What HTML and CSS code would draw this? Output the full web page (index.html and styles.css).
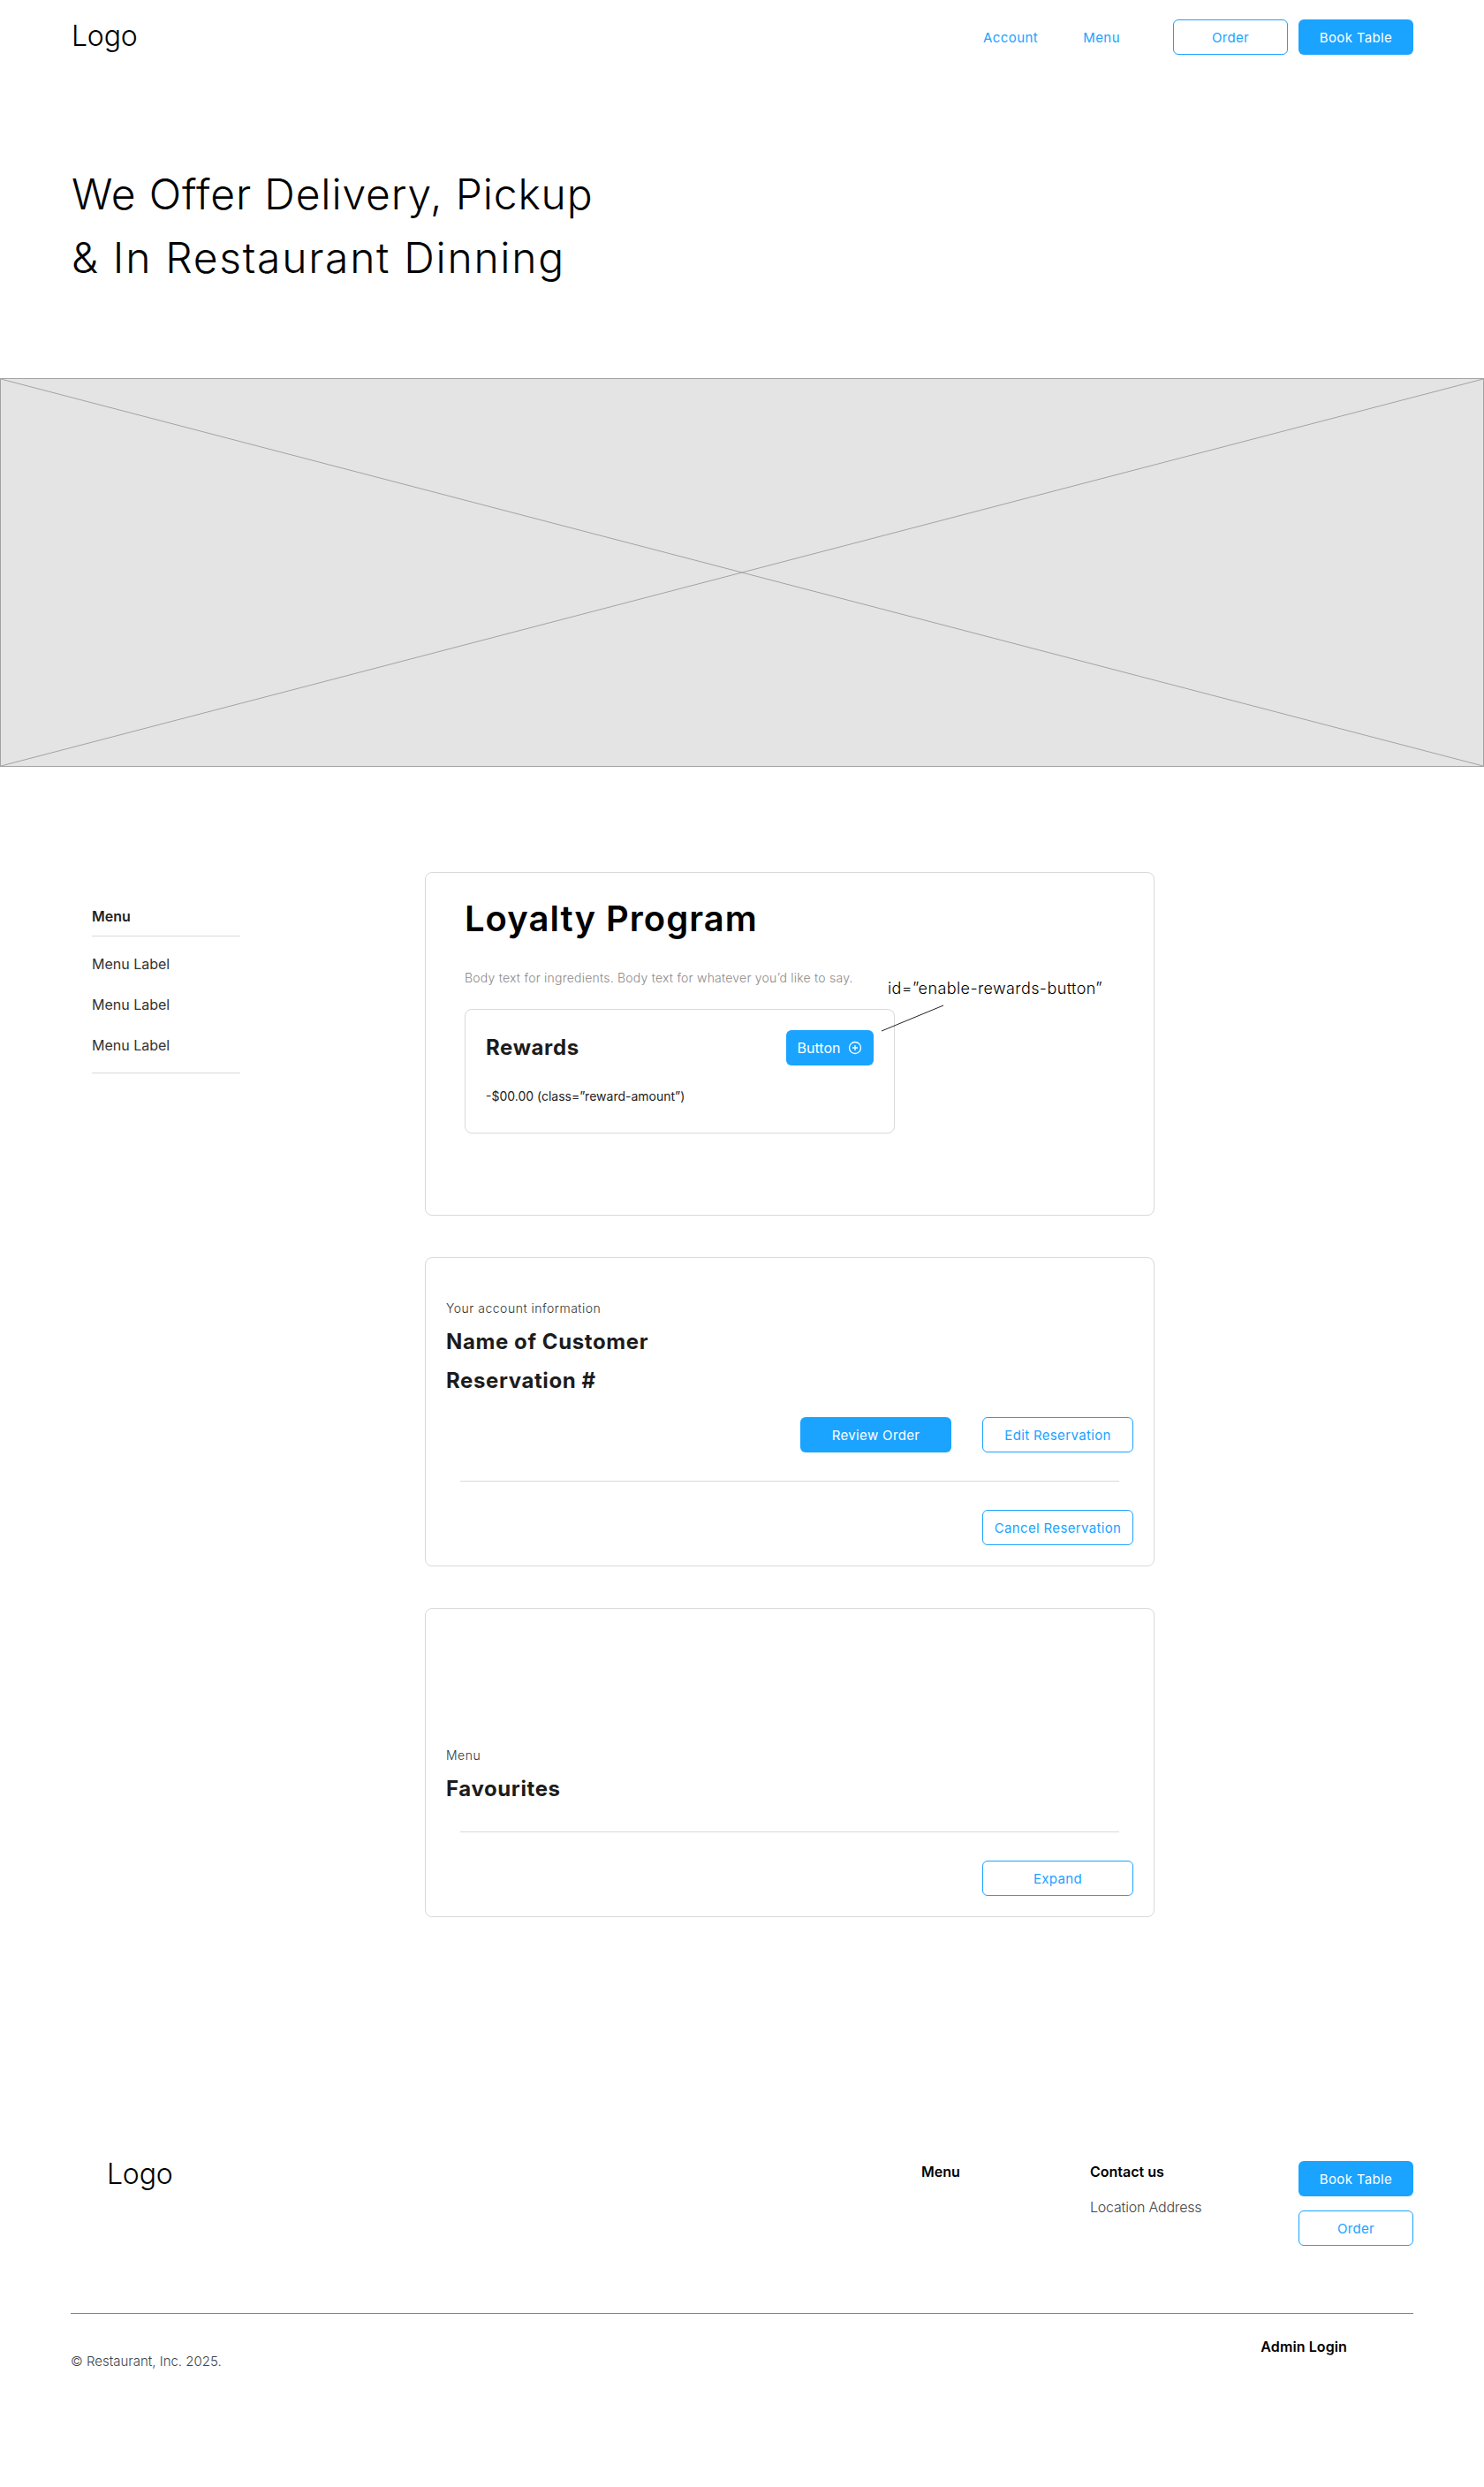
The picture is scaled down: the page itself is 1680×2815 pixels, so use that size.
FILE: index.html
```html
<!DOCTYPE html>
<html lang="en">
<head>
	<meta charset="utf-8">
	<title>Restaurant account</title>
	<link rel="stylesheet" href="styles.css">
</head>
<body>
<header class="nav">
	<div class="logo">Logo</div>
	<nav class="nav-right">
		<a class="nav-link nav-account" href="#">Account</a>
		<a class="nav-link nav-menu" href="#">Menu</a>
		<button class="btn btn-outline btn-nav" type="button">Order</button>
		<button class="btn btn-solid btn-nav" type="button">Book Table</button>
	</nav>
</header>

<section class="hero">
	<h1><span class="hero-first">We Offer Delivery, Pickup</span><br><span class="hero-second">&amp; In Restaurant Dinning</span></h1>
</section>

<div class="placeholder">
	<svg viewBox="0 0 100 100" preserveAspectRatio="none">
		<line x1="0" y1="0" x2="100" y2="100"></line>
		<line x1="0" y1="100" x2="100" y2="0"></line>
	</svg>
</div>

<main class="content">
	<aside class="sidebar">
		<div class="side-title">Menu</div>
		<ul class="side-list">
			<li>Menu Label</li>
			<li>Menu Label</li>
			<li>Menu Label</li>
		</ul>
	</aside>

	<div class="cards">
		<section class="card card-loyalty">
			<h2>Loyalty Program</h2>
			<p class="body-text">Body text for ingredients. Body text for whatever you’d like to say.</p>
			<div class="rewards">
				<div class="rewards-top">
					<h3 class="heading">Rewards</h3>
					<button class="btn btn-solid btn-icon" type="button">
						Button
						<svg class="plus" width="16" height="16" viewBox="0 0 16 16">
							<circle cx="8" cy="8" r="6.5"></circle>
							<path d="M8 5v6M5 8h6"></path>
						</svg>
					</button>
				</div>
				<p class="amount">-$00.00 (class=”reward-amount”)</p>
			</div>
			<div class="note">id=”enable-rewards-button”</div>
			<svg class="note-line" width="72" height="31" viewBox="0 0 72 31">
				<line x1="1" y1="30" x2="71" y2="1"></line>
			</svg>
		</section>

		<section class="card card-account">
			<p class="eyebrow">Your account information</p>
			<h3 class="heading">Name of Customer</h3>
			<h3 class="heading">Reservation #</h3>
			<div class="actions">
				<button class="btn btn-solid btn-wide" type="button">Review Order</button>
				<button class="btn btn-outline btn-wide" type="button">Edit Reservation</button>
			</div>
			<hr class="divider">
			<div class="actions">
				<button class="btn btn-outline btn-wide" type="button">Cancel Reservation</button>
			</div>
		</section>

		<section class="card card-favourites">
			<p class="eyebrow">Menu</p>
			<h3 class="heading">Favourites</h3>
			<hr class="divider">
			<div class="actions">
				<button class="btn btn-outline btn-wide" type="button">Expand</button>
			</div>
		</section>
	</div>
</main>

<footer class="footer">
	<div class="footer-top">
		<div class="logo footer-logo">Logo</div>
		<div class="footer-col">
			<div class="footer-title">Menu</div>
		</div>
		<div class="footer-col">
			<div class="footer-title">Contact us</div>
			<p class="address">Location Address</p>
		</div>
		<div class="footer-btns">
			<button class="btn btn-solid btn-nav" type="button">Book Table</button>
			<button class="btn btn-outline btn-nav" type="button">Order</button>
		</div>
	</div>
	<div class="footer-bottom">
		<p class="copyright">© Restaurant, Inc. 2025.</p>
		<a class="footer-title admin" href="#">Admin Login</a>
	</div>
</footer>
</body>
</html>
```

FILE: styles.css
```css
* {
	box-sizing: border-box;
}
body {
	margin: 0;
	background: #fff;
	color: #000;
	font-family: Inter, "Noto Sans", sans-serif;
}
h1, h2, h3, p, ul {
	margin: 0;
	padding: 0;
}

/* buttons */
.btn {
	height: 40px;
	border-radius: 6px;
	font-family: Inter, sans-serif;
	font-size: 15px;
	letter-spacing: 0.35px;
	cursor: pointer;
}
.btn-solid {
	border: 0;
	background: #1aa3ff;
	color: #fff;
}
.btn-outline {
	border: 1.5px solid #1aa3ff;
	background: #fff;
	color: #1aa3ff;
}
.btn-nav {
	width: 130px;
}
.btn-wide {
	width: 171px;
}
.btn-icon {
	width: 99px;
	display: flex;
	align-items: center;
	justify-content: center;
	gap: 9px;
	font-size: 16px;
	letter-spacing: 0;
}
.plus {
	fill: none;
	stroke: #fff;
	stroke-width: 1.3;
}

/* top bar */
.nav {
	height: 40px;
	margin-top: 22px;
	padding: 0 80px 0 81px;
	display: flex;
	justify-content: space-between;
	align-items: center;
}
.logo {
	font-size: 32px;
	font-weight: 300;
	line-height: 40px;
	letter-spacing: -0.2px;
}
.nav .logo {
	margin-bottom: 2px;
}
.nav-right {
	display: flex;
	align-items: center;
}
.nav-link {
	color: #1aa3ff;
	font-size: 15px;
	letter-spacing: 0.45px;
	text-decoration: none;
}
.nav-account {
	margin-right: 51px;
}
.nav-menu {
	margin-right: 60px;
}
.nav-right .btn + .btn {
	margin-left: 12px;
}

/* hero */
.hero {
	padding: 122px 80px 100px 81px;
}
.hero h1 {
	font-size: 48px;
	font-weight: 300;
	line-height: 72px;
}
.hero-first {
	letter-spacing: 0.84px;
}
.hero-second {
	letter-spacing: 1.7px;
}
.placeholder {
	height: 440px;
	background: #e4e4e4;
	border: 1px solid #a3a3a3;
}
.placeholder svg {
	display: block;
	width: 100%;
	height: 100%;
}
.placeholder line {
	stroke: #a3a3a3;
	stroke-width: 1;
	vector-effect: non-scaling-stroke;
}

/* main area */
.content {
	display: flex;
	padding: 119px 0 0 104px;
}
.sidebar {
	width: 168px;
	margin: 40px 209px 0 0;
}
.side-title {
	padding-bottom: 12px;
	border-bottom: 1px solid #d9d9d9;
	color: #222;
	font-size: 16px;
	font-weight: 600;
	line-height: 20px;
}
.side-list {
	padding: 8px 0;
	border-bottom: 1px solid #d9d9d9;
	list-style: none;
	color: #333;
	font-size: 16px;
	line-height: 46px;
}
.cards {
	width: 826px;
	display: flex;
	flex-direction: column;
	gap: 47px;
}
.card {
	position: relative;
	border: 1px solid #d9d9d9;
	border-radius: 8px;
	padding: 0 23px 23px;
}
.card-loyalty {
	height: 389px;
	padding: 28px 0 0 44px;
}
.card-account {
	padding-top: 47px;
}
.card-favourites {
	padding-top: 156px;
}
.card h2 {
	font-size: 40px;
	font-weight: 600;
	line-height: 48px;
	letter-spacing: 1px;
}
.body-text {
	margin-top: 33px;
	color: #8a8a8a;
	font-size: 14px;
	font-weight: 300;
	line-height: 20px;
	letter-spacing: 0.22px;
}
.rewards {
	width: 487px;
	height: 141px;
	margin-top: 25px;
	padding: 23px 23px 0;
	border: 1px solid #d9d9d9;
	border-radius: 8px;
}
.rewards-top {
	display: flex;
	justify-content: space-between;
	align-items: center;
}
.heading {
	color: #1c1c1c;
	font-size: 24px;
	font-weight: 700;
	line-height: 32px;
	letter-spacing: 0.6px;
}
.amount {
	margin-top: 25px;
	font-size: 14px;
	line-height: 20px;
	color: #222;
}
.note {
	position: absolute;
	left: 523px;
	top: 121px;
	font-size: 18px;
	font-weight: 300;
	line-height: 20px;
	letter-spacing: 0.4px;
}
.note-line {
	position: absolute;
	left: 515px;
	top: 149px;
}
.note-line line {
	stroke: #222;
	stroke-width: 1;
}
.eyebrow {
	margin-bottom: 12px;
	color: #333;
	font-size: 14px;
	font-weight: 300;
	line-height: 20px;
	letter-spacing: 0.5px;
}
.heading + .heading {
	margin-top: 12px;
}
.actions {
	display: flex;
	justify-content: flex-end;
	gap: 35px;
}
.heading + .actions {
	margin-top: 25px;
}
.divider {
	height: 1px;
	margin: 32px 16px;
	border: 0;
	background: #d9d9d9;
}

/* footer */
.footer {
	margin-top: 269px;
	padding: 0 80px;
}
.footer-top {
	display: grid;
	grid-template-columns: 963px 191px 236px 130px;
	height: 180px;
	border-bottom: 1px solid #808080;
}
.footer-logo {
	padding: 2px 0 0 41px;
}
.footer-col {
	padding-top: 9px;
}
.footer-title {
	color: #000;
	font-size: 16px;
	font-weight: 600;
	line-height: 20px;
	text-decoration: none;
}
.address {
	margin-top: 20px;
	color: #444;
	font-size: 16px;
	font-weight: 300;
	line-height: 20px;
	letter-spacing: -0.2px;
}
.footer-btns {
	display: flex;
	flex-direction: column;
	gap: 16px;
	padding-top: 7px;
}
.footer-bottom {
	display: flex;
	justify-content: space-between;
	align-items: flex-start;
	padding: 27px 75px 132px 0;
}
.admin {
	letter-spacing: 0.1px;
}
.copyright {
	margin-top: 17px;
	color: #444;
	font-size: 15px;
	font-weight: 300;
	line-height: 20px;
}
```
